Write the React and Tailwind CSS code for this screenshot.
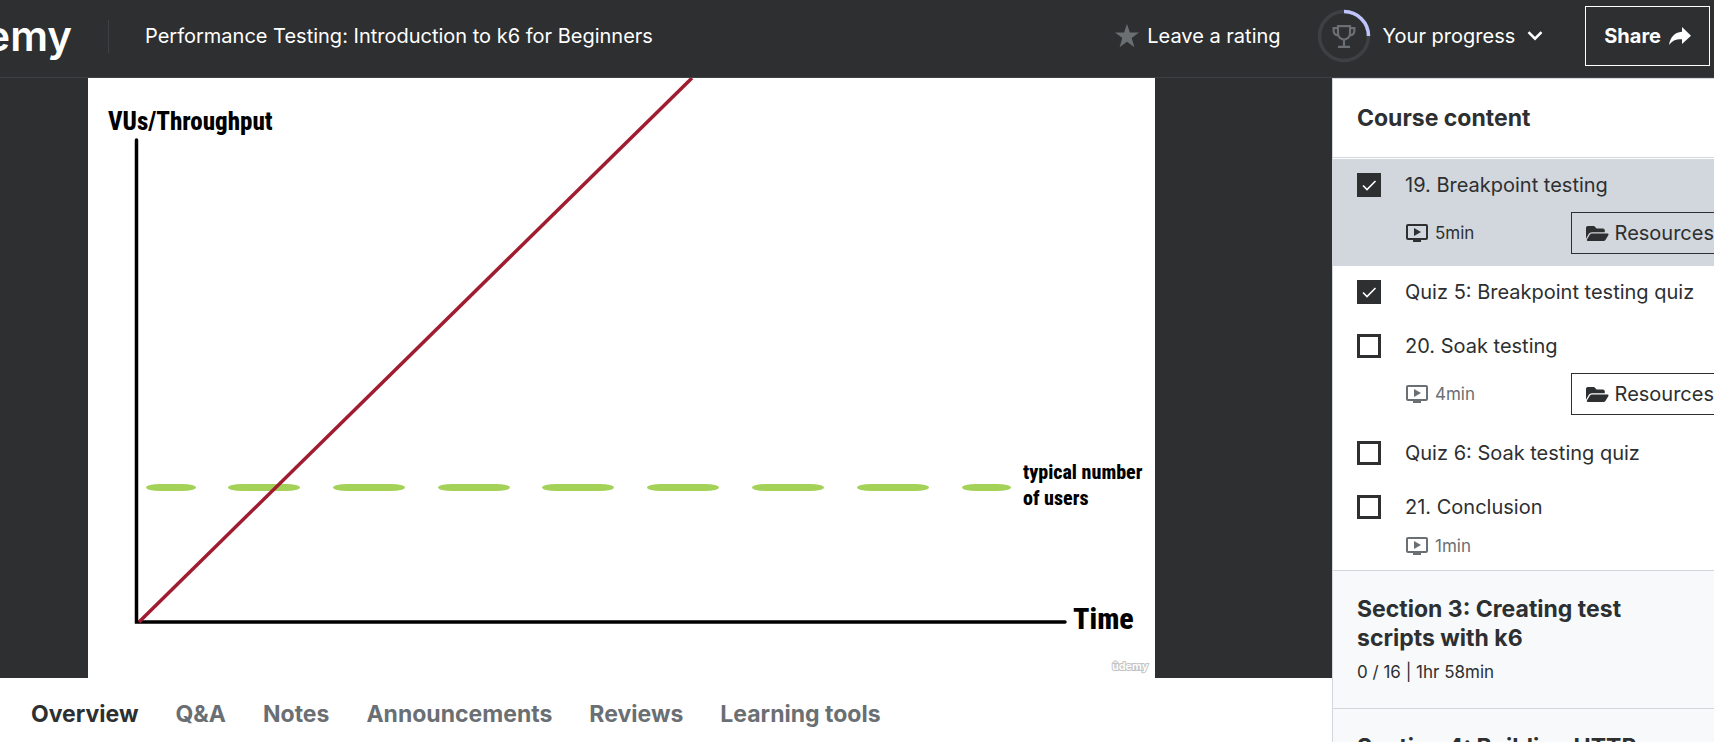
import { FaFolderOpen } from "react-icons/fa";
import { MdOndemandVideo } from "react-icons/md";

const lectures = [
  { id: "l19", title: "19. Breakpoint testing", time: "5min", resources: true, done: true, active: true },
  { id: "q5", title: "Quiz 5: Breakpoint testing quiz", done: true },
  { id: "l20", title: "20. Soak testing", time: "4min", resources: true },
  { id: "q6", title: "Quiz 6: Soak testing quiz" },
  { id: "l21", title: "21. Conclusion", time: "1min" },
];

const tabs = ["Overview", "Q&A", "Notes", "Announcements", "Reviews", "Learning tools"];

const dashes = [
  [58, 50],
  [140, 72],
  [245, 72],
  [350, 72],
  [454, 72],
  [559, 72],
  [664, 72],
  [769, 72],
  [874, 49],
];

function StarIcon() {
  return (
    <svg viewBox="0 0 24 24" className="size-6 fill-[#6a6f73]" aria-hidden="true">
      <path d="M12 0l2.9 8.6H24l-7.3 5.5 2.7 9.2L12 17.8l-7.4 5.5 2.7-9.2L0 8.6h9.1z" />
    </svg>
  );
}

function ProgressRing() {
  return (
    <svg viewBox="0 0 54 54" className="size-[54px]" fill="none" aria-hidden="true">
      <circle cx="27" cy="27" r="24.5" stroke="#3e4143" strokeWidth="3.5" />
      <path d="M27 2.5A24.5 24.5 0 0 1 51.5 27" stroke="#c0c4fc" strokeWidth="3.5" />
      <g stroke="#6a6f73" strokeWidth="2.2">
        <path d="M21 17.1h12v7.4a6 6 0 0 1-12 0z" />
        <path d="M21 19.1h-4.4v2.4c0 2.6 1.8 4.6 4.8 4.8M33 19.1h4.4v2.4c0 2.6-1.8 4.6-4.8 4.8M27 30.5v7M21 37.9h12" />
      </g>
    </svg>
  );
}

function ShareIcon() {
  return (
    <svg viewBox="0 0 22 18" className="h-[18px] w-[22px] fill-white" aria-hidden="true">
      <path d="M22 8.7L13 0v4.8C5 5.6 1.2 10.6 0 18c3-4.4 7-6 13-5.8V17z" />
    </svg>
  );
}

function Header() {
  return (
    <header className="flex h-[78px] shrink-0 items-center border-b border-[#3e4143] bg-[#2d2f31] pr-1 pb-[5px] text-xl text-white">
      <a href="#home" className="flex w-[72px] shrink-0 justify-end overflow-hidden text-[42px] leading-[56px] font-semibold">
        emy
      </a>
      <span className="mx-9 h-[33px] w-px bg-[#3e4143]" />
      <h1 className="whitespace-nowrap">Performance Testing: Introduction to k6 for Beginners</h1>
      <div className="ml-auto flex items-center">
        <button type="button" className="flex items-center gap-2">
          <StarIcon />
          Leave a rating
        </button>
        <button type="button" className="ml-9 flex items-center gap-3">
          <ProgressRing />
          Your progress
          <svg viewBox="0 0 16 10" className="h-2.5 w-4" fill="none" stroke="white" strokeWidth="2.6" aria-hidden="true">
            <path d="M1.5 1.2L8 7.7l6.5-6.5" />
          </svg>
        </button>
        <button type="button" className="ml-[42px] flex h-[60px] items-center gap-2 border border-white px-[18px] font-bold">
          Share
          <ShareIcon />
        </button>
      </div>
    </header>
  );
}

function Slide() {
  return (
    <svg
      viewBox="0 0 1067 600"
      className="h-[600px] max-w-full bg-white font-['Roboto_Condensed','Roboto',sans-serif] font-extrabold"
      role="img"
      aria-label="VUs/Throughput over Time"
    >
      <text x="20" y="52" fontSize="25">VUs/Throughput</text>
      <g fill="#a4d258">
        {dashes.map(([x, width]) => (
          <rect key={x} x={x} y="406" width={width} height="7" rx="14" ry="3.5" />
        ))}
      </g>
      <path d="M48.5 62V544H977" fill="none" stroke="black" strokeWidth="3.5" strokeLinecap="round" />
      <path d="M51 544L604 0" stroke="#a01c30" strokeWidth="3.5" />
      <text x="935" y="401" fontSize="20">typical number</text>
      <text x="935" y="427" fontSize="20">of users</text>
      <text x="985" y="551" fontSize="30">Time</text>
      <text x="1024" y="592" fontSize="11" fill="white" stroke="#c4c4c4" strokeWidth="2" paintOrder="stroke" className="font-['Inter',sans-serif] font-semibold">
        ûdemy
      </text>
    </svg>
  );
}

function Lecture({ id, title, time, resources, done, active }) {
  return (
    <li className={active ? "flex bg-[#d1d7dc] pt-[11px] pl-6" : "flex pt-[11px] pl-6"}>
      <span className="mt-[3px] grid size-6 shrink-0">
        <input
          id={id}
          type="checkbox"
          defaultChecked={done}
          className="peer col-start-1 row-start-1 size-6 appearance-none border-3 border-[#2d2f31] checked:bg-[#2d2f31]"
        />
        <svg viewBox="0 0 24 24" className="pointer-events-none invisible col-start-1 row-start-1 size-6 peer-checked:visible" fill="none" stroke="white" strokeWidth="1.6" aria-hidden="true">
          <path d="M6 12.5l4 4L18.5 8" />
        </svg>
      </span>
      <div className="ml-6 flex-1">
        <label htmlFor={id} className="block text-xl leading-[30px] whitespace-nowrap">{title}</label>
        {time ? (
          <div className="mt-3 mb-3 flex items-center justify-between">
            <span className={active ? "flex items-center gap-1.5 text-[17px] leading-6" : "flex items-center gap-1.5 text-[17px] leading-6 text-[#6a6f73]"}>
              <MdOndemandVideo className="size-6" />
              {time}
            </span>
            {resources && (
              <button type="button" className="flex h-[42px] w-[143px] items-center gap-1.5 border border-r-0 border-[#2d2f31] pl-3.5 text-xl">
                <FaFolderOpen className="size-[23px]" />
                Resources
              </button>
            )}
          </div>
        ) : (
          <div className="h-[13px]" />
        )}
      </div>
    </li>
  );
}

function Section({ title, meta }) {
  return (
    <section className="shrink-0 border-t border-[#d1d7dc] bg-[#f7f9fa] pt-6 pr-14 pb-[25px] pl-6">
      <h3 className="text-[23px] leading-[29px] font-bold">{title}</h3>
      {meta && <p className="mt-2 text-[17px] leading-[22px]">{meta}</p>}
    </section>
  );
}

export default function App() {
  return (
    <div className="flex h-screen flex-col overflow-hidden bg-white font-['Inter','Liberation_Sans',sans-serif] text-[#2d2f31]">
      <Header />
      <div className="flex min-h-0 flex-1">
        <main className="min-w-0 flex-1">
          <div className="flex bg-[#2d2f31] pl-[88px]">
            <Slide />
          </div>
          <nav className="flex gap-[37px] pt-5 pl-[31px] text-[23px] leading-8 font-bold">
            {tabs.map((tab, i) => (
              <button key={tab} type="button" className={i === 0 ? "whitespace-nowrap" : "whitespace-nowrap text-[#6a6f73]"}>
                {tab}
              </button>
            ))}
          </nav>
        </main>
        <aside className="flex w-[382px] shrink-0 flex-col overflow-hidden border-t border-l border-[#d1d7dc]">
          <h2 className="mb-px border-b border-[#d1d7dc] py-6 pl-6 text-[23px] leading-[30px] font-bold">Course content</h2>
          <ul>
            {lectures.map((lecture) => (
              <Lecture key={lecture.id} {...lecture} />
            ))}
          </ul>
          <Section title="Section 3: Creating test scripts with k6" meta="0 / 16 | 1hr 58min" />
          <Section title="Section 4: Building HTTP" />
        </aside>
      </div>
    </div>
  );
}
